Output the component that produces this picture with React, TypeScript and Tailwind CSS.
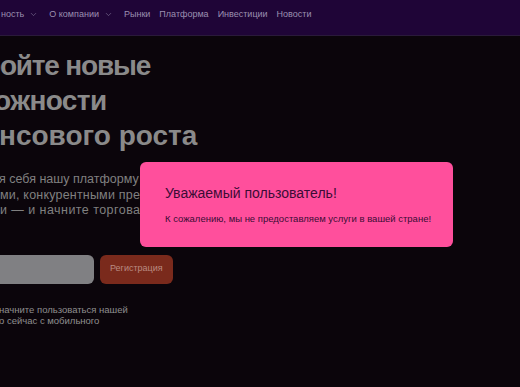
import { ChevronDown } from "lucide-react";

const navItems = [
  { label: "ность", drop: true },
  { label: "О компании", drop: true },
  { label: "Рынки" },
  { label: "Платформа" },
  { label: "Инвестиции" },
  { label: "Новости" },
];

export default function App() {
  return (
    <div
      className="relative w-[520px] h-[387px] overflow-hidden bg-[#0b050b]"
      style={{ fontFamily: '"Liberation Sans", Arial, sans-serif' }}
    >
      <header className="h-[36px] bg-[#1f0537] border-b border-[#2a1a3a] flex items-center">
        <nav className="flex items-center gap-[9px] ml-[1px] -mt-[6px] text-[9px] text-[#9b8fb0]">
          {navItems.map((item) => (
            <div key={item.label} className="flex items-center gap-[5px]">
              <span>{item.label}</span>
              {item.drop && (
                <ChevronDown size={9} strokeWidth={1.5} className="text-[#8a7fa0] mr-[2px]" />
              )}
            </div>
          ))}
        </nav>
      </header>

      <main className="pt-[12px]">
        <h1 className="text-[28px] leading-[35px] font-bold text-[#8a8a8a] whitespace-nowrap">
          <div className="-ml-[16px] tracking-[-1.2px]">ройте новые</div>
          <div className="-ml-[6px] tracking-[-0.6px]">ожности</div>
          <div className="-ml-[1px]">нсового роста</div>
        </h1>

        <div className="mt-[19px] text-[12.5px] leading-[15.5px] text-[#808080] whitespace-nowrap">
          <div className="-ml-[1px]">я себя нашу платформу с выгодными</div>
          <div className="ml-[0px] tracking-[0.2px]">ми, конкурентными преимуществами</div>
          <div className="ml-[0px] tracking-[0.45px]">и — и начните торговать уже сегодня</div>
        </div>

        <div className="mt-[36px] flex items-center gap-[6px]">
          <div className="w-[94px] h-[29px] rounded-r-[6px] bg-[#808083]" />
          <button className="h-[29px] px-[10px] rounded-[6px] bg-[#7a2a1c] text-[9px] text-[#b98a82]">
            Регистрация
          </button>
        </div>

        <div className="mt-[20px] text-[9.5px] leading-[11.5px] text-[#8f8f8f] whitespace-nowrap">
          <div className="-ml-[1px]">начните пользоваться нашей</div>
          <div className="-ml-[1px]">о сейчас с мобильного</div>
        </div>
      </main>

      <div className="absolute left-[140px] top-[162px] w-[313px] h-[85px] rounded-[6px] bg-[#ff4f9c] pl-[25px] pt-[22px]">
        <div className="text-[14px] leading-[18px] text-[#3b0c35]">Уважаемый пользователь!</div>
        <div className="mt-[11px] text-[9.5px] leading-[11px] text-[#3b0c35]">
          К сожалению, мы не предоставляем услуги в вашей стране!
        </div>
      </div>
    </div>
  );
}
